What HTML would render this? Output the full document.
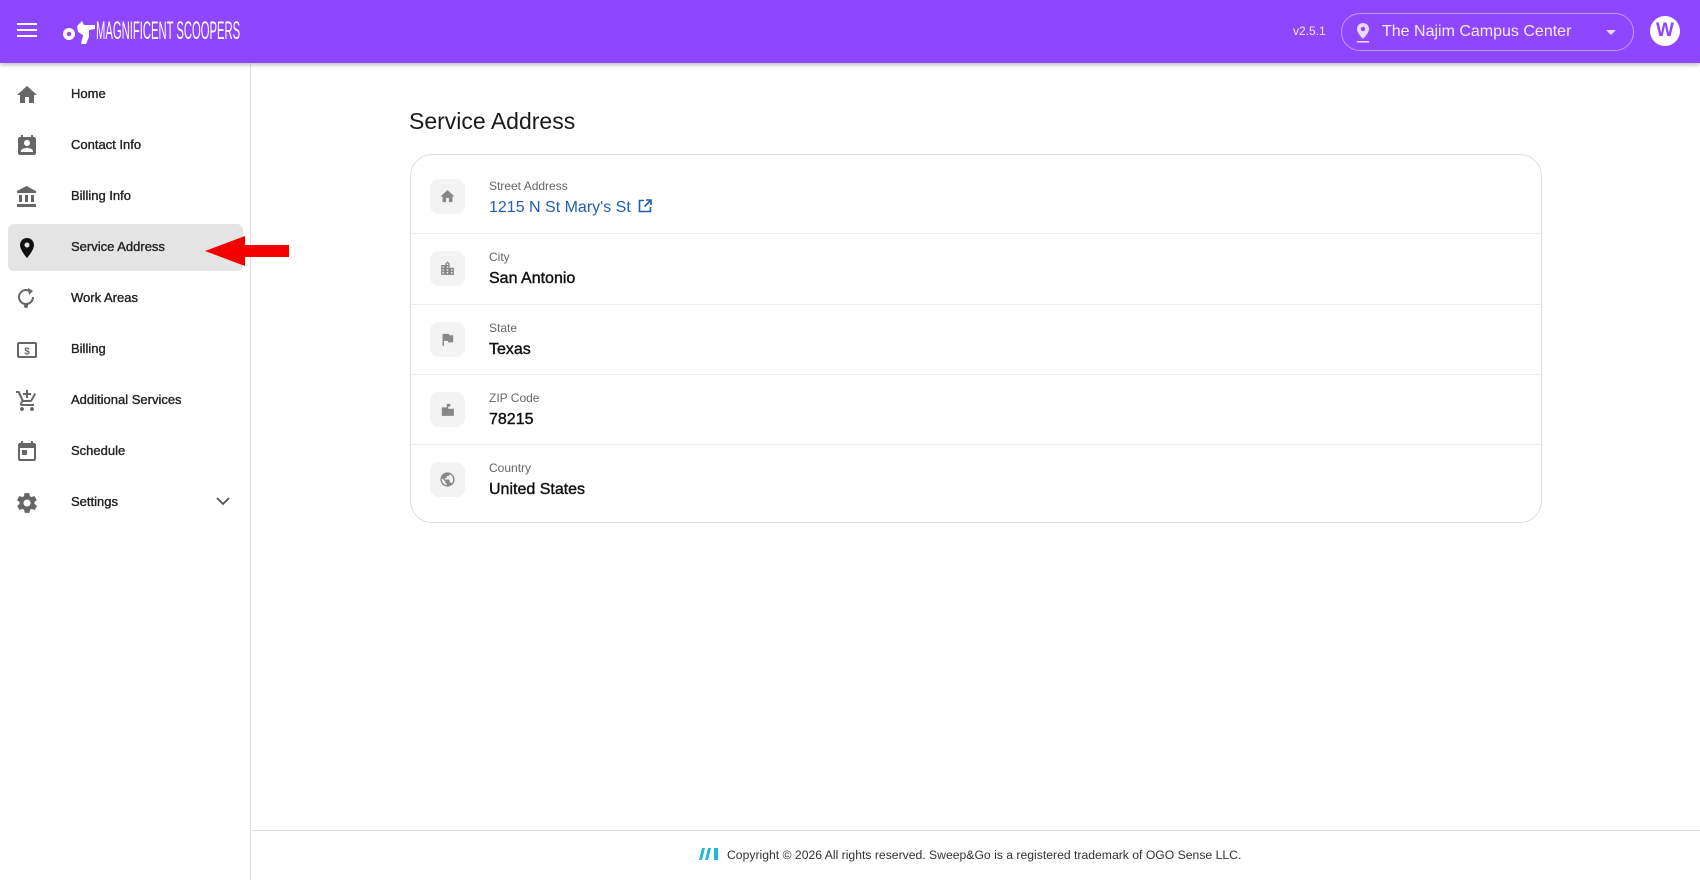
<!DOCTYPE html>
<html><head><meta charset="utf-8"><style>
*{box-sizing:border-box;margin:0;padding:0}
body{width:1700px;height:880px;overflow:hidden;background:#fff;font-family:"Liberation Sans",Arial,sans-serif;position:relative;color:#111}
.hdr{position:absolute;left:0;top:0;width:1700px;height:63px;background:#8f46ff;box-shadow:0 2px 4px rgba(0,0,0,.25);z-index:5}
.side{position:absolute;left:0;top:63px;width:251px;height:817px;border-right:1px solid #e0e0e0;background:#fff}
.item{position:absolute;left:8px;width:235px;height:47px;border-radius:6px}
.item svg{position:absolute;left:7px;top:12px}
.item span{position:absolute;left:63px;top:15px;font-size:13px;color:#222;-webkit-text-stroke:.35px #222}
.card{position:absolute;left:410px;top:154px;width:1132px;height:369px;border:1px solid #dedede;border-radius:22px}
.row{position:absolute;left:0;width:1130px;border-bottom:1px solid #ececec}
.ib{position:absolute;left:19px;width:35px;height:35px;border-radius:9px;background:#f3f3f3}
.ib svg{position:absolute;left:9px;top:9px}
.lab{position:absolute;left:78px;font-size:12px;color:#666}
.val{position:absolute;left:78px;font-size:16px;color:#111;-webkit-text-stroke:.4px #111}
</style></head><body>
<div class="hdr">
<svg style="position:absolute;left:17px;top:22px" width="20" height="16" viewBox="0 0 20 16"><rect y="1" width="20" height="2" fill="#fff"/><rect y="7" width="20" height="2" fill="#fff"/><rect y="13" width="20" height="2" fill="#fff"/></svg>
<svg style="position:absolute;left:62px;top:20px" width="34" height="26" viewBox="0 0 34 26"><circle cx="7" cy="14" r="6" fill="#fff"/><circle cx="7" cy="14" r="2.2" fill="#8f46ff"/><path d="M15 6 L20 1 L22 5 L33 5 L33 9 L27 10 L27 17 L24 24 L19 24 L21 15 L16 12 Z" fill="#fff"/></svg>
<div style="position:absolute;left:96px;top:17px;color:#fff;font-size:25px;transform:scaleX(.45);transform-origin:left;white-space:nowrap">MAGNIFICENT SCOOPERS</div>
<div style="position:absolute;left:1293px;top:24px;color:#f1e8ff;font-size:12px">v2.5.1</div>
<div style="position:absolute;left:1341px;top:13px;width:293px;height:38px;border:1px solid rgba(255,255,255,.45);border-radius:19px">
<svg style="position:absolute;left:14px;top:9px" width="14" height="20" viewBox="0 0 14 20"><path d="M7 0C3.5 0 1 2.7 1 6c0 4.2 6 10 6 10s6-5.8 6-10C13 2.7 10.5 0 7 0z" fill="#e9d8ff"/><circle cx="7" cy="6" r="2.2" fill="#8f46ff"/><rect x="1" y="18" width="12" height="1.6" fill="#e9d8ff"/></svg>
<div style="position:absolute;left:40px;top:9px;color:#f4ecff;font-size:16px">The Najim Campus Center</div>
<svg style="position:absolute;left:264px;top:16px" width="10" height="6"><path d="M0 0h10L5 5z" fill="#e9d8ff"/></svg>
</div>
<div style="position:absolute;left:1650px;top:16px;width:30px;height:30px;border-radius:50%;background:#fff;color:#8f46ff;font-size:19px;text-align:center;line-height:30px;font-weight:bold">W</div>
</div>
<div class="side">
<div class="item" style="top:8px"><svg width="24" height="24" viewBox="0 0 24 24"><path d="M10 20v-6h4v6h5v-8h3L12 3 2 12h3v8z" fill="#666"/></svg><span>Home</span></div>
<div class="item" style="top:59px"><svg width="24" height="24" viewBox="0 0 24 24"><path d="M19 3h-1V1h-2v2H8V1H6v2H5c-1.1 0-2 .9-2 2v14c0 1.1.9 2 2 2h14c1.1 0 2-.9 2-2V5c0-1.1-.9-2-2-2zm-7 3c1.7 0 3 1.3 3 3s-1.3 3-3 3-3-1.3-3-3 1.3-3 3-3zm6 12H6v-1c0-2 4-3.1 6-3.1s6 1.1 6 3.1v1z" fill="#666"/></svg><span>Contact Info</span></div>
<div class="item" style="top:110px"><svg width="24" height="24" viewBox="0 0 24 24"><path d="M4 10v7h3v-7H4zm6 0v7h3v-7h-3zM2 22h19v-3H2v3zm14-12v7h3v-7h-3zM11.5 1L2 6v2h19V6l-9.5-5z" fill="#666"/></svg><span>Billing Info</span></div>
<div class="item" style="top:161px;background:#e4e4e4"><svg width="24" height="24" viewBox="0 0 24 24"><path d="M12 2C8.1 2 5 5.1 5 9c0 5.2 7 13 7 13s7-7.8 7-13c0-3.9-3.1-7-7-7zm0 9.5c-1.4 0-2.5-1.1-2.5-2.5s1.1-2.5 2.5-2.5 2.5 1.1 2.5 2.5-1.1 2.5-2.5 2.5z" fill="#111"/></svg><span>Service Address</span></div>
<div class="item" style="top:212px"><svg width="24" height="24" viewBox="0 0 24 24"><path d="M18 10a7 7 0 1 1-4-6.3" stroke="#666" stroke-width="2" fill="none"/><path d="M13 1l5 3-4 4z" fill="#666"/><circle cx="11" cy="19" r="2" fill="#666"/></svg><span>Work Areas</span></div>
<div class="item" style="top:263px"><svg width="24" height="24" viewBox="0 0 24 24"><rect x="3" y="5" width="18" height="14" rx="1" stroke="#666" stroke-width="2" fill="none"/><text x="12" y="16.5" font-size="10" font-weight="bold" text-anchor="middle" fill="#666" font-family="Liberation Sans">$</text></svg><span>Billing</span></div>
<div class="item" style="top:314px"><svg width="24" height="24" viewBox="0 0 24 24"><path d="M11 9h2V6h3V4h-3V1h-2v3H8v2h3v3zM7 18c-1.1 0-2 .9-2 2s.9 2 2 2 2-.9 2-2-.9-2-2-2zm10 0c-1.1 0-2 .9-2 2s.9 2 2 2 2-.9 2-2-.9-2-2-2zM1 2v2h2l3.6 7.6L5.2 14c-.7 1.3.3 3 1.8 3h12v-2H7l1.1-2h7.4c.8 0 1.4-.4 1.7-1l3.9-7-1.7-1-3.9 7H8.5L4.3 2H1z" fill="#666"/></svg><span>Additional Services</span></div>
<div class="item" style="top:365px"><svg width="24" height="24" viewBox="0 0 24 24"><path d="M19 3h-1V1h-2v2H8V1H6v2H5c-1.1 0-2 .9-2 2v14c0 1.1.9 2 2 2h14c1.1 0 2-.9 2-2V5c0-1.1-.9-2-2-2zm0 16H5V8h14v11zM7 10h5v5H7z" fill="#666"/></svg><span>Schedule</span></div>
<div class="item" style="top:416px"><svg width="24" height="24" viewBox="0 0 24 24"><path d="M19.4 13c0-.3.1-.6.1-1s0-.7-.1-1l2.1-1.6c.2-.2.2-.4.1-.6l-2-3.5c-.1-.2-.4-.3-.6-.2l-2.5 1c-.5-.4-1.100-.7-1.7-1l-.4-2.6c0-.2-.2-.4-.5-.4h-4c-.2 0-.5.2-.5.4l-.4 2.6c-.6.3-1.2.6-1.7 1l-2.5-1c-.2-.1-.5 0-.6.2l-2 3.5c-.1.2-.1.5.1.6L4.6 11c0 .3-.1.7-.1 1s0 .7.1 1l-2.1 1.6c-.2.2-.2.4-.1.6l2 3.5c.1.2.4.3.6.2l2.5-1c.5.4 1.1.7 1.7 1l.4 2.6c0 .2.2.4.5.4h4c.2 0 .5-.2.5-.4l.4-2.6c.6-.3 1.2-.6 1.7-1l2.5 1c.2.1.5 0 .6-.2l2-3.5c.1-.2.1-.5-.1-.6L19.4 13zM12 15.5c-1.9 0-3.5-1.6-3.5-3.5s1.6-3.5 3.5-3.5 3.5 1.6 3.5 3.5-1.6 3.5-3.5 3.5z" fill="#666"/></svg><span>Settings</span><svg style="left:208px;top:18px" width="14" height="9" viewBox="0 0 14 9"><path d="M1 1l6 6 6-6" stroke="#555" stroke-width="1.8" fill="none"/></svg></div>
</div>
<svg style="position:absolute;left:205px;top:236px" width="84" height="30" viewBox="0 0 84 30"><path d="M0 15L40 0v9h44v12H40v9z" fill="#f40000"/></svg>
<div style="position:absolute;left:409px;top:108px;font-size:23px;color:#1a1a1a">Service Address</div>
<div class="card">
<div class="row" style="top:0;height:79px"><div class="ib" style="top:24px"><svg width="17" height="17" viewBox="0 0 24 24"><path d="M10 20v-6h4v6h5v-8h3L12 3 2 12h3v8z" fill="#888"/></svg></div><div class="lab" style="top:24px">Street Address</div><div class="val" style="top:44px;color:#1f5fb3;-webkit-text-stroke:0">1215 N St Mary's St <svg style="vertical-align:-1px;margin-left:3px" width="14" height="14" viewBox="0 0 14 14"><path d="M6 1.5H1.5v11h11V8M8 1h5v5M13 1L6.5 7.5" stroke="#1f5fb3" stroke-width="1.6" fill="none"/></svg></div></div>
<div class="row" style="top:79px;height:71px"><div class="ib" style="top:17px"><svg width="17" height="17" viewBox="0 0 24 24"><path d="M15 11V5l-3-3-3 3v2H3v14h18V11h-6zM7 19H5v-2h2v2zm0-4H5v-2h2v2zm0-4H5V9h2v2zm6 8h-2v-2h2v2zm0-4h-2v-2h2v2zm0-4h-2V9h2v2zm0-4h-2V5h2v2zm6 12h-2v-2h2v2zm0-4h-2v-2h2v2z" fill="#888"/></svg></div><div class="lab" style="top:16px">City</div><div class="val" style="top:36px">San Antonio</div></div>
<div class="row" style="top:150px;height:70px"><div class="ib" style="top:17px"><svg width="17" height="17" viewBox="0 0 24 24"><path d="M14.4 6L14 4H5v17h2v-7h5.6l.4 2h7V6z" fill="#888"/></svg></div><div class="lab" style="top:16px">State</div><div class="val" style="top:36px">Texas</div></div>
<div class="row" style="top:220px;height:70px"><div class="ib" style="top:17px"><svg width="17" height="17" viewBox="0 0 24 24"><path d="M4 9h7V4h5v4h-3v3h8v10H4z" fill="#888"/></svg></div><div class="lab" style="top:16px">ZIP Code</div><div class="val" style="top:36px">78215</div></div>
<div class="row" style="top:290px;height:77px;border:none"><div class="ib" style="top:17px"><svg width="17" height="17" viewBox="0 0 24 24"><path d="M12 2C6.5 2 2 6.5 2 12s4.5 10 10 10 10-4.5 10-10S17.5 2 12 2zm-1 17.9c-4-.5-7-3.9-7-7.9 0-.6.1-1.2.2-1.8L9 15v1c0 1.1.9 2 2 2v1.9zm6.9-2.5c-.3-.8-1-1.4-1.9-1.4h-1v-3c0-.6-.4-1-1-1H8v-2h2c.6 0 1-.4 1-1V7h2c1.1 0 2-.9 2-2v-.4c2.9 1.2 5 4.1 5 7.4 0 2.1-.8 4-2.1 5.4z" fill="#888"/></svg></div><div class="lab" style="top:16px">Country</div><div class="val" style="top:36px">United States</div></div>
</div>
<div style="position:absolute;left:252px;top:830px;width:1448px;border-top:1px solid #ddd"></div>
<svg style="position:absolute;left:699px;top:848px" width="20" height="12" viewBox="0 0 20 12"><path d="M3 0h3L3 12H0zM9 0h3L9 12H6zM15 0h4v12h-4z" fill="#22b8d8"/></svg>
<div style="position:absolute;left:727px;top:848px;font-size:12.2px;color:#333">Copyright © 2026 All rights reserved. Sweep&amp;Go is a registered trademark of OGO Sense LLC.</div>
</body></html>
